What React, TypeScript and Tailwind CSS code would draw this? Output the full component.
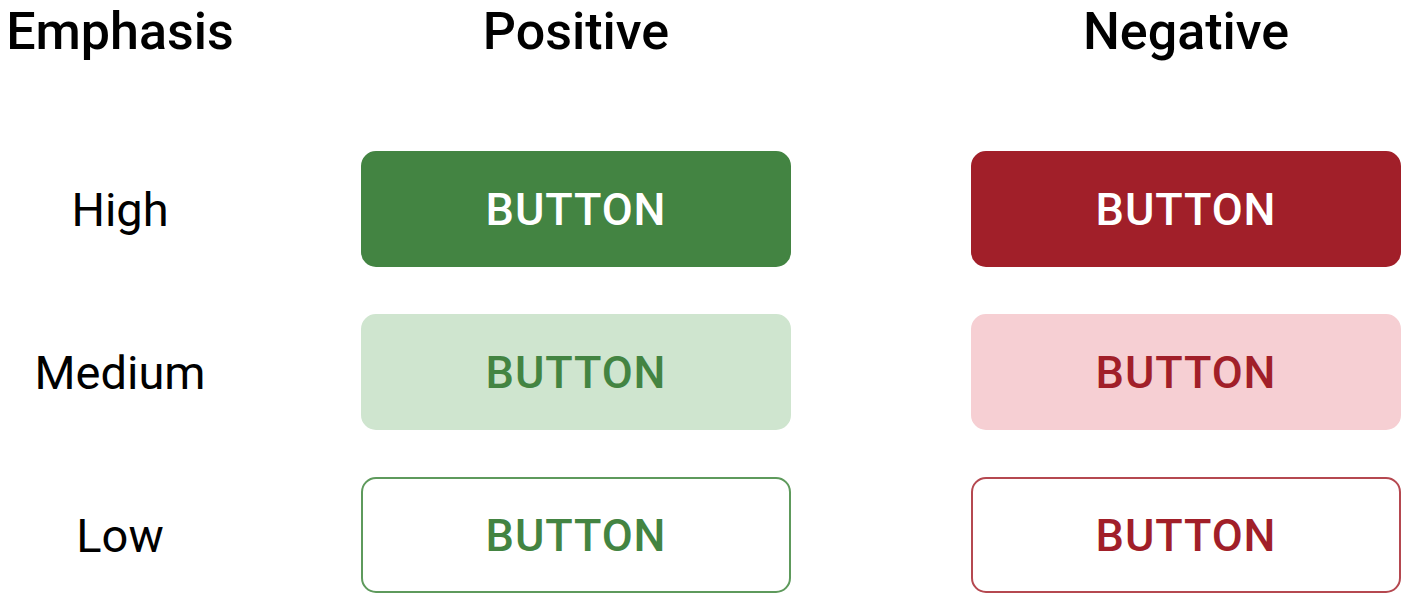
const rows = [
  {
    label: "High",
    pos: "bg-[#438442] text-white border-[#438442]",
    neg: "bg-[#a11f29] text-white border-[#a11f29]",
  },
  {
    label: "Medium",
    pos: "bg-[#cfe5cf] text-[#438442] border-[#cfe5cf]",
    neg: "bg-[#f6cfd3] text-[#a11f29] border-[#f6cfd3]",
  },
  {
    label: "Low",
    pos: "bg-white text-[#438442] border-[#5e9a5c]",
    neg: "bg-white text-[#a11f29] border-[#b54850]",
  },
];

function Button({ className }: { className: string }) {
  return (
    <button
      className={`w-[430px] h-[116px] rounded-[15px] border-2 text-[45px] font-medium tracking-[0.02em] leading-none flex items-center justify-center ${className}`}
    >
      BUTTON
    </button>
  );
}

export default function App() {
  return (
    <div
      className="w-[1414px] h-[606px] bg-white text-black overflow-hidden"
      style={{ fontFamily: "Roboto, 'Liberation Sans', sans-serif" }}
    >
      {/* headers */}
      <div className="flex h-[64px] items-center text-[52px] font-medium leading-none">
        <div className="w-[240px] text-center">Emphasis</div>
        <div className="w-[430px] ml-[121px] text-center">Positive</div>
        <div className="w-[430px] ml-[180px] text-center">Negative</div>
      </div>

      <div className="mt-[87px] flex flex-col gap-[47px]">
        {rows.map((row) => (
          <div key={row.label} className="flex items-center">
            <div className="w-[240px] text-center text-[47px] leading-none">{row.label}</div>
            <div className="ml-[121px]">
              <Button className={row.pos} />
            </div>
            <div className="ml-[180px]">
              <Button className={row.neg} />
            </div>
          </div>
        ))}
      </div>
    </div>
  );
}
